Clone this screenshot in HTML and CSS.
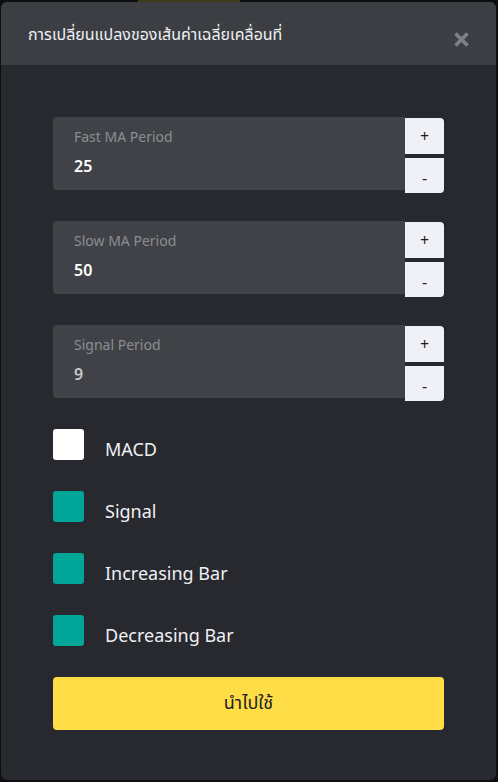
FILE: index.html
```html
<!DOCTYPE html>
<html lang="th">
<head>
<meta charset="utf-8">
<link rel="stylesheet" href="styles.css">
</head>
<body>
<div class="backdrop-strip"></div>
<div class="modal">
  <div class="modal-header">
    <div class="modal-title">การเปลี่ยนแปลงของเส้นค่าเฉลี่ยเคลื่อนที่</div>
    <svg class="close-icon" width="17" height="17" viewBox="0 0 17 17">
      <path d="M2.5 2.5 L14.5 14.5 M14.5 2.5 L2.5 14.5" stroke="#7d8088" stroke-width="3.8" stroke-linecap="butt"/>
    </svg>
  </div>
  <div class="modal-body">
    <div class="field-row">
      <div class="field">
        <div class="field-label">Fast MA Period</div>
        <div class="field-value">25</div>
      </div>
      <div class="steppers">
        <div class="step step-plus">+</div>
        <div class="step step-minus">-</div>
      </div>
    </div>
    <div class="field-row">
      <div class="field">
        <div class="field-label">Slow MA Period</div>
        <div class="field-value">50</div>
      </div>
      <div class="steppers">
        <div class="step step-plus">+</div>
        <div class="step step-minus">-</div>
      </div>
    </div>
    <div class="field-row">
      <div class="field">
        <div class="field-label">Signal Period</div>
        <div class="field-value dim">9</div>
      </div>
      <div class="steppers">
        <div class="step step-plus">+</div>
        <div class="step step-minus">-</div>
      </div>
    </div>
    <div class="legend">
      <div class="legend-row"><span class="swatch white"></span><span class="legend-label">MACD</span></div>
      <div class="legend-row"><span class="swatch teal"></span><span class="legend-label">Signal</span></div>
      <div class="legend-row"><span class="swatch teal"></span><span class="legend-label">Increasing Bar</span></div>
      <div class="legend-row"><span class="swatch teal"></span><span class="legend-label">Decreasing Bar</span></div>
    </div>
    <div class="apply-btn">นำไปใช้</div>
  </div>
</div>
</body>
</html>
```
FILE: styles.css
```css
html, body {
  margin: 0;
  padding: 0;
}
body {
  background: #0c0e12;
  width: 498px;
  height: 782px;
  overflow: hidden;
  font-family: "Noto Sans", "Noto Sans Thai", "Open Sans", sans-serif;
}
.backdrop-strip {
  height: 2px;
  width: 102px;
  margin-left: 138px;
  background: #3f3a1a;
}
.modal {
  margin-left: 1px;
  width: 495px;
  height: 778px;
  border-radius: 6px;
  overflow: hidden;
  background: #27292e;
  display: flex;
  flex-direction: column;
}
.modal-header {
  height: 63px;
  flex: none;
  background: #3c3e43;
  display: flex;
  align-items: center;
  justify-content: space-between;
  padding: 0 26px 0 27px;
}
.modal-title {
  color: #eef0f3;
  font-size: 16px;
  line-height: 22px;
  margin-top: 0;
}
.close-icon {
  display: block;
  margin-top: 12px;
}
.modal-body {
  padding: 52px 52px 0 52px;
  display: flex;
  flex-direction: column;
}
.field-row {
  display: flex;
  height: 76px;
  margin-bottom: 28px;
}
.field {
  flex: 1;
  height: 73px;
  background: #404247;
  border-radius: 4px 0 0 4px;
  padding: 10px 21px;
  box-sizing: border-box;
}
.field-label {
  color: #8b8e94;
  font-size: 14px;
  line-height: 20px;
}
.field-value {
  color: #ffffff;
  font-size: 16px;
  font-weight: 600;
  line-height: 22px;
  margin-top: 8px;
}
.field-value.dim {
  color: #c5c7cc;
}
.steppers {
  width: 39px;
  display: flex;
  flex-direction: column;
  gap: 4px;
  padding-top: 1px;
}
.step {
  background: #f0f1f7;
  color: #1e2026;
  display: flex;
  align-items: center;
  justify-content: center;
  font-size: 16px;
}
.step-plus {
  height: 36px;
  border-radius: 0 4px 0 0;
}
.step-minus {
  height: 35px;
  border-radius: 0 0 4px 0;
  padding-top: 4px;
  box-sizing: border-box;
}
.legend {
  display: flex;
  flex-direction: column;
  gap: 31px;
  margin-bottom: 31px;
}
.legend-row {
  display: flex;
  align-items: flex-start;
  height: 31px;
}
.swatch {
  width: 31px;
  height: 31px;
  border-radius: 3px;
  flex: none;
}
.swatch.white {
  background: #ffffff;
}
.swatch.teal {
  background: #02a699;
}
.legend-label {
  margin-left: 21px;
  margin-top: 8px;
  color: #eef0f4;
  font-size: 18px;
  line-height: 24px;
}
.apply-btn {
  height: 53px;
  background: #fedd46;
  border-radius: 4px;
  color: #1e2026;
  font-size: 18px;
  display: flex;
  align-items: center;
  justify-content: center;
}
```
